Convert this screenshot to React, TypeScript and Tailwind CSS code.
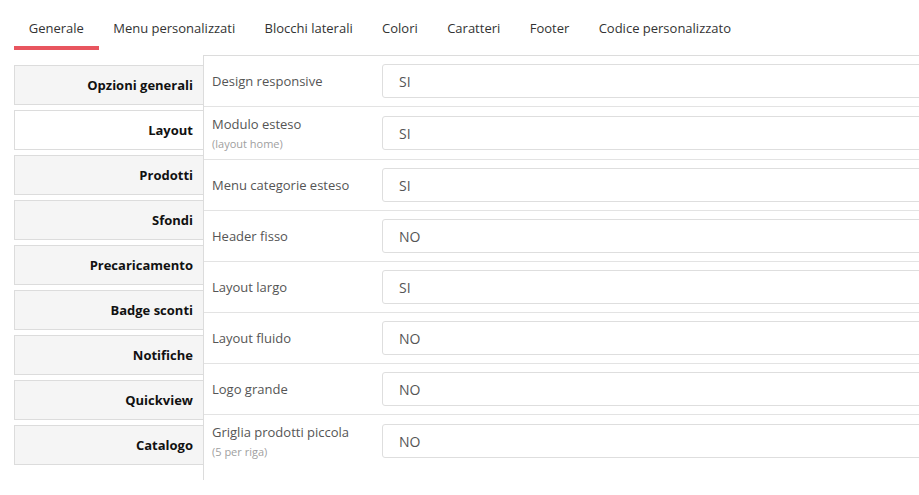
import React from 'react';

interface Option {
  label: string;
  hint?: string;
  value: string;
}

const tabs = [
  'Generale',
  'Menu personalizzati',
  'Blocchi laterali',
  'Colori',
  'Caratteri',
  'Footer',
  'Codice personalizzato',
];

const sections = [
  'Opzioni generali',
  'Layout',
  'Prodotti',
  'Sfondi',
  'Precaricamento',
  'Badge sconti',
  'Notifiche',
  'Quickview',
  'Catalogo',
];

const options: Option[] = [
  { label: 'Design responsive', value: 'SI' },
  { label: 'Modulo esteso', hint: '(layout home)', value: 'SI' },
  { label: 'Menu categorie esteso', value: 'SI' },
  { label: 'Header fisso', value: 'NO' },
  { label: 'Layout largo', value: 'SI' },
  { label: 'Layout fluido', value: 'NO' },
  { label: 'Logo grande', value: 'NO' },
  { label: 'Griglia prodotti piccola', hint: '(5 per riga)', value: 'NO' },
];

export default function App() {
  const activeTab = 0;
  const activeSection = 1;

  return (
    <div
      className="w-[919px] h-[495px] overflow-hidden bg-white text-[13px]"
      style={{ fontFamily: '"Open Sans", "Liberation Sans", sans-serif' }}
    >
      {/* tabs */}
      <div className="flex pl-[14px]">
        {tabs.map((tab, i) => (
          <button
            key={tab}
            className={`px-[14.7px] pt-[19px] pb-[9px] leading-[18px] border-b-4 text-[#333] ${
              i === activeTab ? 'border-[#e8555f]' : 'border-transparent'
            }`}
          >
            {tab}
          </button>
        ))}
      </div>

      <div className="flex mt-[5px]">
        {/* menu laterale */}
        <div className="ml-[14px] w-[189px] pt-[10px] flex flex-col gap-[5px] shrink-0">
          {sections.map((s, i) => (
            <div
              key={s}
              className={`h-[40px] flex items-center justify-end pr-[10px] pt-[2px] border-l border-t border-b border-[#dcdcdc] font-bold text-[#111] ${
                i === activeSection ? 'bg-white' : 'bg-[#f5f5f5]'
              }`}
            >
              {s}
            </div>
          ))}
        </div>

        {/* pannello opzioni */}
        <div className="w-[780px] shrink-0 border-l border-t border-[#dcdcdc] h-[425px]">
          {options.map((o, i) => (
            <div
              key={o.label}
              className={`flex items-center pl-[8px] pr-[10px] py-2 ${
                i < options.length - 1 ? 'border-b border-[#e3e3e3]' : ''
              }`}
            >
              <div className="w-[170px] shrink-0 text-[#555]">
                <div className="leading-[18px]">{o.label}</div>
                {o.hint && (
                  <div className="mt-[3px] text-[11px] leading-[15px] text-[#a0a0a0]">{o.hint}</div>
                )}
              </div>
              <div className="flex-1 h-[34px] flex items-center px-[16px] border border-[#dedede] rounded-[3px] text-[#555] text-[14px]">
                {o.value}
              </div>
            </div>
          ))}
        </div>
      </div>
    </div>
  );
}
